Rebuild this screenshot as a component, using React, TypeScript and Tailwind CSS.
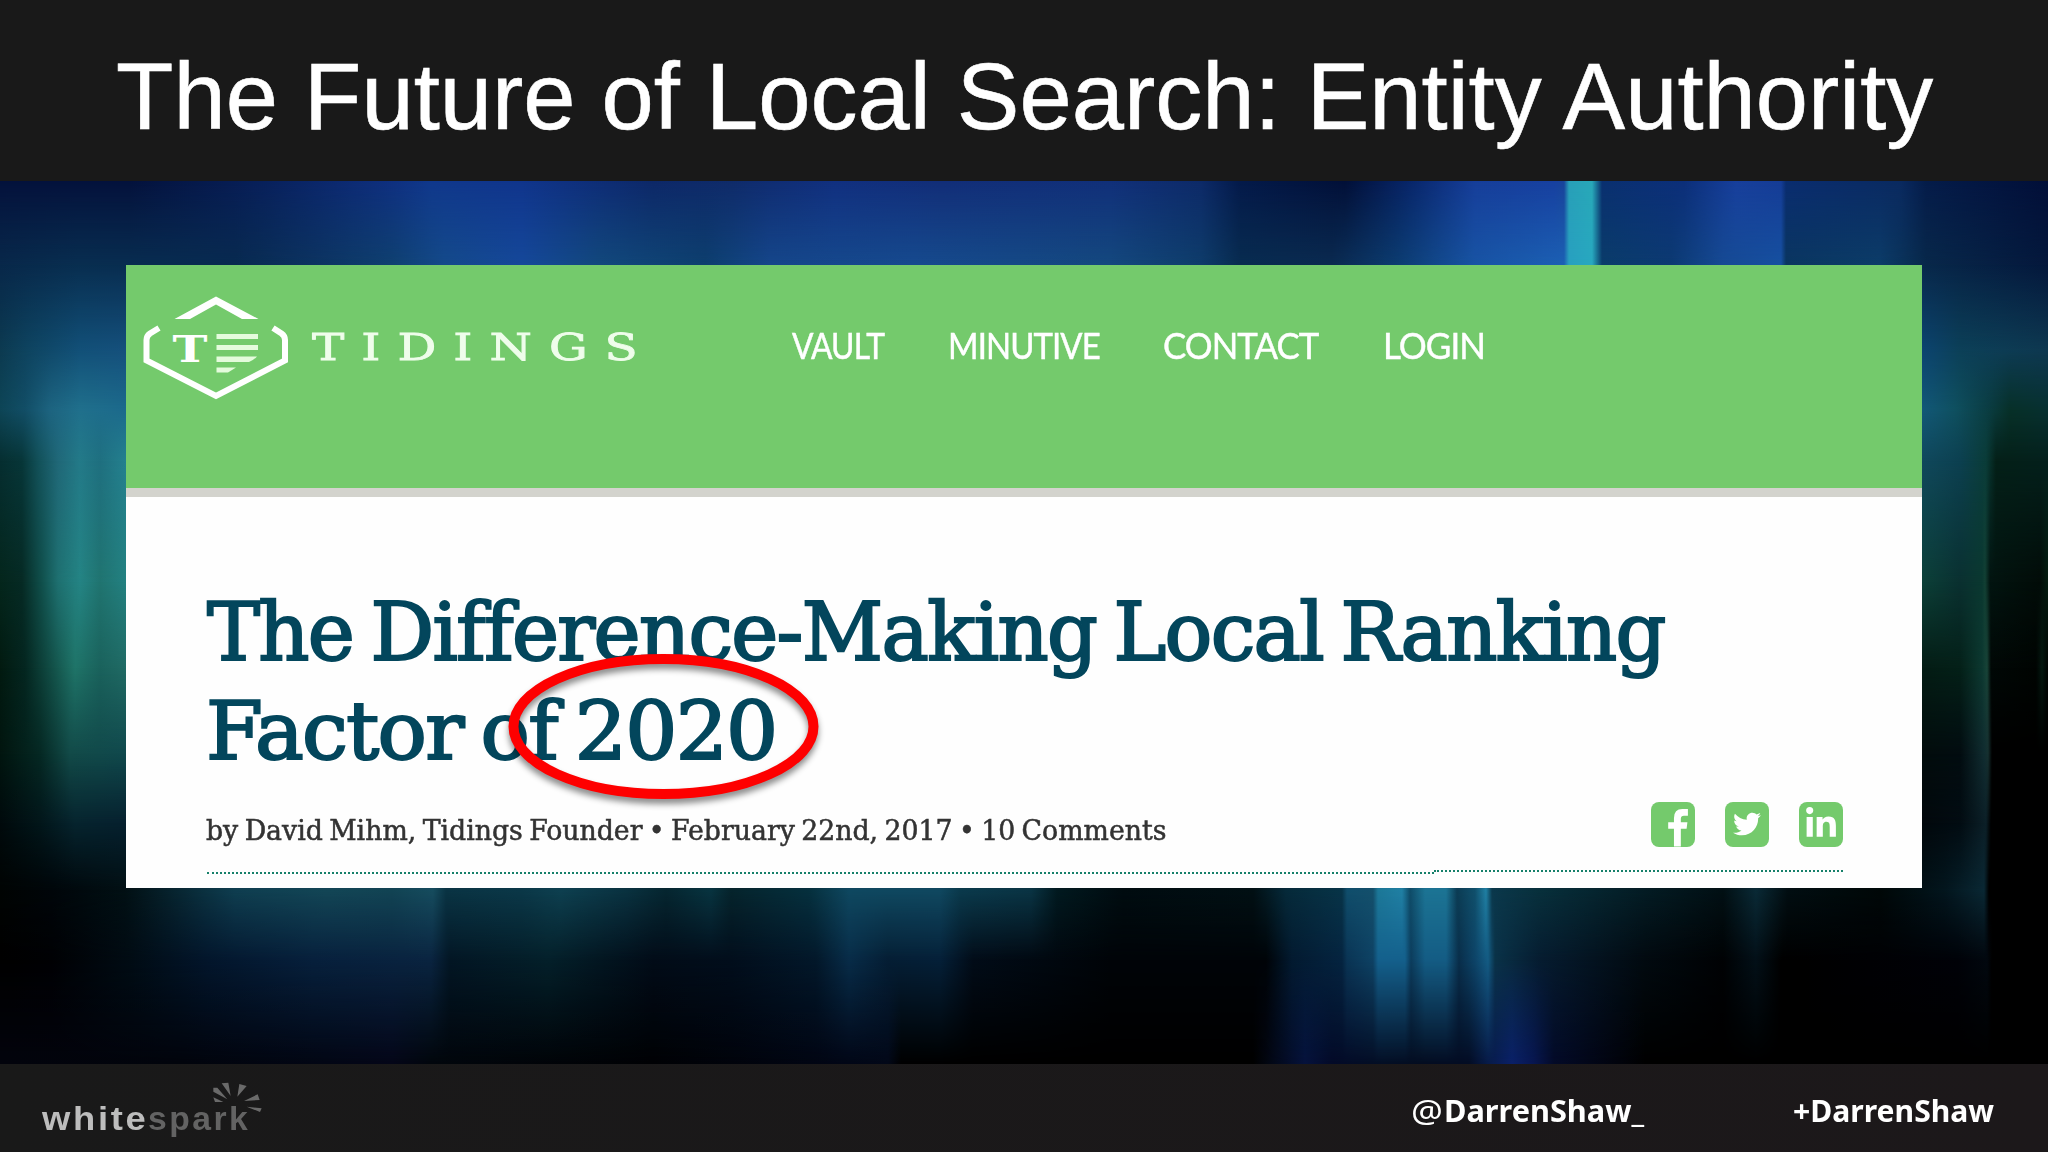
import React, { useLayoutEffect, useRef, useState } from "react";
import { FaLinkedinIn, FaTwitter } from "react-icons/fa";

// each row is a horizontal run of colours, rows fade into the next one going down
const backdrop: { y: number; stops: string }[] = [
  {
    y: 0,
    stops:
      "0 #04123c,130 #04123c,261 #08205a,392 #0f3080,431 #10388c,522 #10358c,653 #0d2868,731 #0f2b6a,835 #113080,940 #122e78,1110 #11307a,1201 #0d2a68,1240 #041a4a,1345 #021038,1410 #08266a,1475 #163e9a,1554 #1740a0,1564 #18449a,1569 #28a0b8,1592 #28a8b8,1602 #0a3070,1684 #0c2f7a,1736 #173f9c,1781 #153c96,1786 #0a2d70,1900 #0a2a60,1926 #051c4a,2048 #020f38",
  },
  {
    y: 84,
    stops:
      "0 #08284a,78 #082e50,235 #082a50,313 #0c3360,392 #0f4070,444 #144a8a,522 #15489a,600 #12487c,705 #0d3f6e,770 #15468a,914 #164a8e,1110 #14487e,1201 #0e3c6a,1240 #082c50,1332 #0a2a50,1397 #0c3c70,1475 #1854a4,1564 #1c60b4,1569 #28a0c0,1592 #28a8c0,1602 #0a3c6a,1671 #0c3a72,1723 #164a94,1781 #1650a0,1786 #0a3660,1880 #0c3c68,1926 #08284a,2048 #04183c",
  },
  { y: 169, stops: "0 #0c3a50,28 #0e4460,80 #125078,125 #15507c,1922 #0c4470,1960 #0c4058,2048 #0e3850" },
  { y: 229, stops: "0 #0d4556,25 #124e66,50 #1d6480,80 #20708c,125 #1c6a8c,1922 #125878,1955 #0f5060,1990 #0a3c40,2010 #073028,2048 #073030" },
  { y: 280, stops: "0 #062e30,22 #073638,38 #125058,58 #206878,80 #237a88,100 #1f7080,125 #24808e,1922 #10485c,1960 #0c4050,1986 #0a3c38,1996 #042018,2048 #04201c" },
  { y: 401, stops: "0 #04261c,22 #062a24,42 #10504c,58 #1e7070,80 #248484,100 #207470,125 #238080,1922 #0c4038,1960 #0a3030,1982 #0a3830,1985 #124034,1990 #021410,2040 #020c08,2048 #041c10" },
  { y: 487, stops: "0 #021a10,25 #042620,50 #114c44,75 #1f7468,100 #1a625c,125 #206a64,1922 #041c14,1960 #042018,1982 #0c3830,1987 #184438,1991 #010806,2036 #000402,2042 #041810,2048 #000402" },
  { y: 573, stops: "0 #01150f,40 #052823,70 #124a48,125 #10484c,1922 #020c0c,1960 #020c10,1984 #102c30,1988 #163030,1992 #000000,2048 #000000" },
  { y: 642, stops: "0 #000a0c,40 #02161a,75 #06242e,125 #06202e,1922 #02080c,1960 #020c12,1986 #0c2028,1991 #000000,2048 #000000" },
  {
    y: 709,
    stops:
      "0 #000403,52 #00060a,125 #021014,196 #0a2e3c,235 #0f3e50,326 #134656,392 #124454,433 #164c5e,446 #0a3444,522 #0b3848,561 #0e4050,627 #0a3240,666 #062630,711 #083440,731 #06242c,809 #06303e,849 #0f4860,940 #104860,960 #0b3a4c,1031 #0a3444,1057 #021a20,1123 #010c10,1253 #021014,1286 #062a3a,1342 #083448,1347 #104e6c,1373 #14506c,1378 #1c7898,1402 #2080a4,1410 #0f4c68,1425 #1c7494,1446 #1c7494,1457 #0c3c54,1475 #10506c,1486 #2080a4,1492 #0b384c,1540 #08303c,1645 #041c24,1723 #021014,1756 #0a2a36,1788 #020e12,1880 #000808,1945 #03161e,1984 #0a2834,1989 #000000,2048 #000000",
  },
  {
    y: 779,
    stops:
      "0 #000000,52 #000104,130 #010c14,209 #03162c,313 #07203c,431 #0a2440,450 #031624,548 #04202a,653 #020c18,731 #020e1c,816 #03182a,849 #082c48,888 #051e34,940 #052038,973 #020c18,1044 #010810,1110 #000408,1266 #000408,1292 #031a30,1342 #052440,1347 #0a3454,1373 #0e4264,1378 #14608c,1405 #14608c,1411 #0c3c5c,1425 #145c84,1446 #145c84,1459 #092e4a,1475 #0d4468,1488 #145c84,1495 #0a3248,1540 #061c30,1645 #020a10,1723 #000204,1756 #031018,1782 #000000,1958 #000208,1987 #02080f,1992 #000000,2048 #000000",
  },
  {
    y: 883,
    stops:
      "0 #02030c,183 #01040c,326 #020614,392 #040618,431 #01060c,653 #000104,849 #010616,888 #020818,901 #000000,1253 #000000,1273 #020818,1305 #05123c,1332 #030a28,1384 #030e24,1423 #030c20,1469 #030c24,1488 #071a48,1512 #0a2068,1534 #071650,1554 #030a28,1619 #01030c,1645 #000000,2048 #000000",
  },
];

function Backdrop() {
  return (
    <svg className="absolute inset-0 w-full h-full" viewBox="0 0 2048 883" preserveAspectRatio="none" aria-hidden="true">
      <defs>
        {backdrop.map((row, i) => (
          <React.Fragment key={row.y}>
            <linearGradient id={`row${i}`} gradientUnits="userSpaceOnUse" x1="0" y1="0" x2="2048" y2="0">
              {row.stops.split(",").map((stop) => {
                const [x, color] = stop.split(" ");
                return <stop key={x} offset={Number(x) / 2048} stopColor={color} />;
              })}
            </linearGradient>
            {i > 0 && (
              <>
                <linearGradient id={`fade${i}`} gradientUnits="userSpaceOnUse" x1="0" y1={backdrop[i - 1].y} x2="0" y2={row.y}>
                  <stop offset="0" stopColor="#fff" stopOpacity="0" />
                  <stop offset="1" stopColor="#fff" />
                </linearGradient>
                <mask id={`mask${i}`} maskUnits="userSpaceOnUse" x="0" y="0" width="2048" height="883">
                  <rect width="2048" height="883" fill={`url(#fade${i})`} />
                </mask>
              </>
            )}
          </React.Fragment>
        ))}
      </defs>
      {backdrop.map((row, i) => (
        <rect key={row.y} width="2048" height="883" fill={`url(#row${i})`} mask={i > 0 ? `url(#mask${i})` : undefined} />
      ))}
    </svg>
  );
}

// squeezes or stretches one line of text to the width of its box
function FitText({ className, children }: { className: string; children: React.ReactNode }) {
  const box = useRef<HTMLSpanElement>(null);
  const line = useRef<HTMLSpanElement>(null);
  const [scale, setScale] = useState(1);

  useLayoutEffect(() => {
    if (box.current && line.current) {
      setScale(box.current.clientWidth / line.current.offsetWidth);
    }
  }, []);

  return (
    <span ref={box} className={`block shrink-0 ${className}`}>
      <span ref={line} className="inline-block whitespace-nowrap origin-left align-top" style={{ transform: `scaleX(${scale})` }}>
        {children}
      </span>
    </span>
  );
}

function TidingsMark() {
  return (
    <svg className="w-[150px] h-[108px] shrink-0" viewBox="141 293 150 108" fill="none">
      <path d="M174.5 318 L216 295.5 L258.500 318 H242 L216 303.500 L190 318 Z" fill="#fff" />
      <path
        d="M159 327 L150 332.500 Q146.500 335 146.500 339 V359.500 L216 395 L285 359.500 V339 Q285 335 281.500 332.500 L273 327"
        stroke="#fff"
        strokeWidth="6"
      />
      <text x="190" y="361" textAnchor="middle" fill="#fff" className="font-['DejaVu_Serif'] font-bold text-[38px]" textLength="35" lengthAdjust="spacingAndGlyphs">
        T
      </text>
      <path d="M216.500 333 H258 V338 H216.500 Z M216.500 344 H258 V349 H216.500 Z M216.500 355.500 H257 Q254 359 249 361 H216.500 Z M216.500 366.500 H236 L228 371.500 H216.500 Z" fill="#e4fbdc" />
    </svg>
  );
}

function SocialLinks() {
  return (
    <div className="flex gap-[29.5px]">
      <a className="size-[44.5px] rounded-[8px] bg-[#74ca6c] overflow-hidden">
        <svg viewBox="0 0 44 44" className="size-full">
          <path d="M22.700 44 V26.500 H17 V20 H22.700 V16 Q22.700 7 31 7 H36.500 V13.500 H32.500 Q29.500 13.500 29.500 16.500 V20 H36 L35.200 26.500 H29.500 V44 Z" fill="#fff" />
        </svg>
      </a>
      <a className="size-[44.5px] rounded-[8px] bg-[#74ca6c] flex items-center justify-center text-white">
        <FaTwitter className="size-[28px]" />
      </a>
      <a className="size-[44.5px] rounded-[8px] bg-[#74ca6c] flex items-center justify-center text-white">
        <FaLinkedinIn className="size-[34px]" />
      </a>
    </div>
  );
}

function ArticleCard() {
  return (
    <article className="relative w-[1796px] h-[623px] bg-[#fefefe]">
      <header className="h-[232px] bg-[#74ca6c] border-b-[9px] border-[#d3d3cd] flex items-start pt-[29px] pl-[15px] text-white">
        <TidingsMark />
        <FitText className="w-[343px] ml-[21px] mt-[30px] font-['DejaVu_Serif',serif] text-[37px] leading-[48px] tracking-[13px] text-[#effdeb] [-webkit-text-stroke:0.8px]">
          TIDINGS
        </FitText>
        <nav className="flex ml-[137px] mt-[27px] font-['Lato',sans-serif] text-[37px] leading-[48px] tracking-[-1px] [-webkit-text-stroke:0.5px]">
          <FitText className="w-[92px] mr-[64px]">VAULT</FitText>
          <FitText className="w-[152px] mr-[63px]">MINUTIVE</FitText>
          <FitText className="w-[155px] mr-[65px]">CONTACT</FitText>
          <FitText className="w-[102px]">LOGIN</FitText>
        </nav>
      </header>

      <div className="pt-[86px] pl-[80px] pr-[79px] font-['DejaVu_Serif_Condensed','DejaVu_Serif',serif]">
        <h2 className="text-[81px] leading-[98.5px] text-[#03465c] [word-spacing:-0.07em] tracking-[-1.5px] [-webkit-text-stroke:2px]">
          <FitText className="w-[1458px] ml-[1px]">The Difference-Making Local Ranking</FitText>
          <FitText className="w-[570px]">Factor of 2020</FitText>
        </h2>
        <div className="flex justify-between mt-[22px]">
          <FitText className="w-[960px] mt-[9px] text-[28px] leading-[40px] text-[#333333] [word-spacing:-0.07em] [-webkit-text-stroke:0.5px]">
            by David Mihm, Tidings Founder • February 22nd, 2017 • 10 Comments
          </FitText>
          <SocialLinks />
        </div>
        <div className="flex mt-[19px] ml-[1px]">
          <div className="w-[1227px] pt-[2px] border-b-2 border-dotted border-[#16806a]" />
          <div className="grow h-[2px] border-b-2 border-dotted border-[#16806a]" />
        </div>
      </div>

      {/* circle drawn over the year */}
      <svg className="absolute left-[376px] top-[383px] w-[330px] h-[165px] drop-shadow-[0_5px_3px_rgba(0,0,0,0.45)]" viewBox="0 0 330 165">
        <ellipse cx="161.500" cy="78.500" rx="150" ry="67.500" fill="none" stroke="#fe0000" strokeWidth="10" />
      </svg>
    </article>
  );
}

function Whitespark() {
  return (
    <div className="relative flex ml-[42px] mt-[32px] font-['Liberation_Sans',sans-serif] font-bold text-[34px] leading-[44px]">
      <FitText className="w-[106px] tracking-[2.5px] text-[#bdbdbd]">white</FitText>
      <FitText className="w-[102px] tracking-[2.5px] text-[#636363]">spark</FitText>
      <svg className="absolute left-[168px] -top-[16px] w-[55px] h-[35px]" viewBox="630 90 165 105" fill="#6a6a6a">
        <path d="M640 113 H652 L682 148 L640 125 Z M640 142 L670 156 H645 Z M665 100 L685 98 L692 138 Z M718 102 L740 108 L712 140 Z M732 153 L773 133 L779 150 Z M740 170 L785 175 L780 186 Z" />
      </svg>
    </div>
  );
}

export default function App() {
  return (
    <div className="w-[2048px] h-[1152px] overflow-hidden flex flex-col bg-[#191919]">
      <header className="h-[181px] shrink-0 pt-[50px] pl-[116px] text-white">
        <h1 className="font-['Liberation_Sans',sans-serif] text-[94px] leading-none [-webkit-text-stroke:0.6px]">
          <FitText className="w-[1817px]">The Future of Local Search: Entity Authority</FitText>
        </h1>
      </header>

      <main className="relative h-[883px] shrink-0 flex justify-center pt-[84px]">
        <Backdrop />
        <ArticleCard />
      </main>

      <footer className="grow flex items-start justify-between bg-linear-to-r from-[#191919] to-[#1c181a]">
        <Whitespark />
        <div className="flex mt-[24px] mr-[54px] font-['Noto_Sans',sans-serif] font-bold text-[31px] leading-[44px] text-white">
          <FitText className="w-[32px] font-normal">@</FitText>
          <FitText className="w-[200px] ml-[1px]">DarrenShaw_</FitText>
          <FitText className="w-[201px] ml-[149px]">+DarrenShaw</FitText>
        </div>
      </footer>
    </div>
  );
}
